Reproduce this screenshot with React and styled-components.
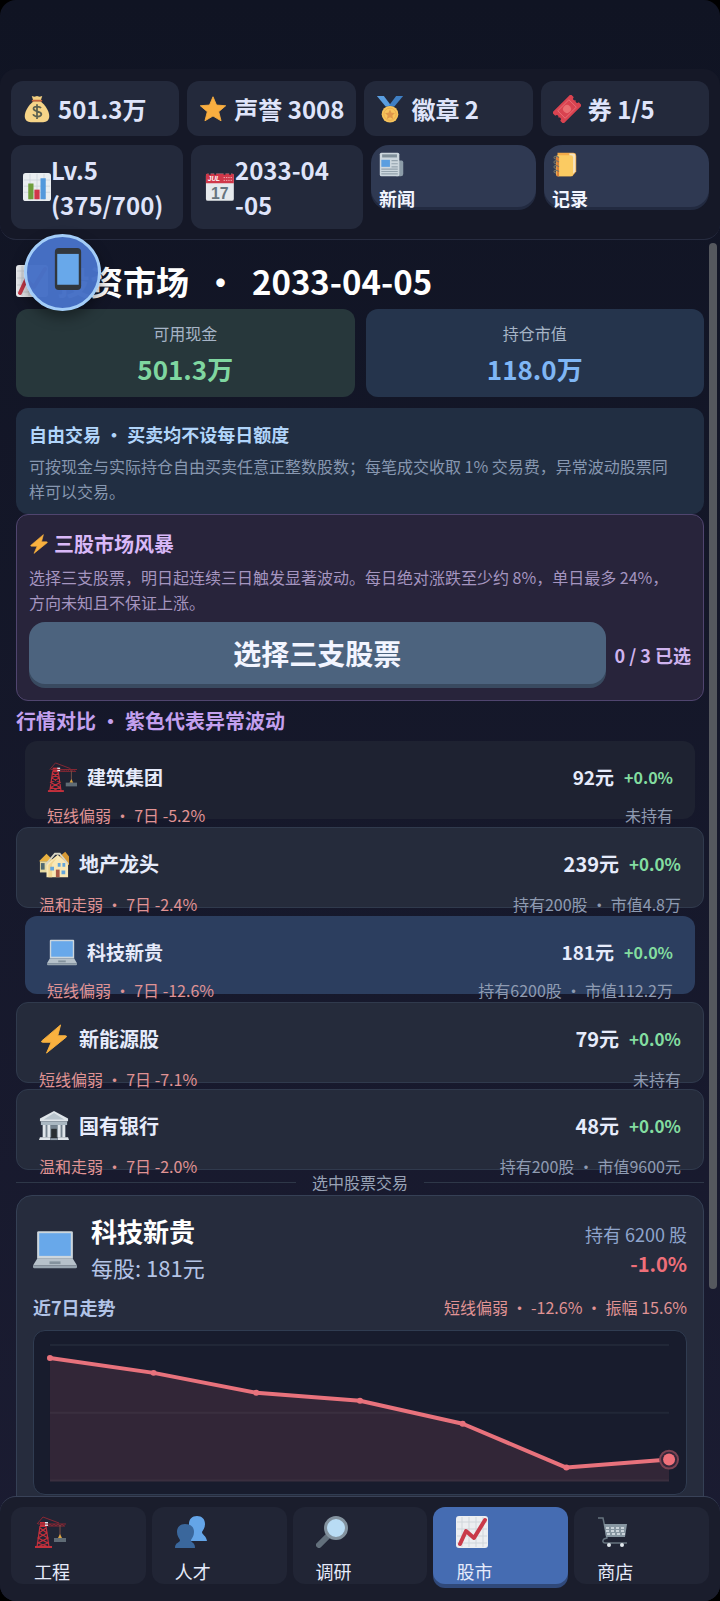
import React from "react";
import styled, { createGlobalStyle, css } from "styled-components";

const GlobalStyle = createGlobalStyle`
	* {
		box-sizing: border-box;
	}

	body {
		margin: 0;
		background-color: #000000;
		font-family: "Noto Sans CJK SC", "Noto Sans", sans-serif;
		color: #dfe4fa;
	}

	button {
		font-family: inherit;
		color: inherit;
		border: none;
		margin: 0;
		text-align: left;
		cursor: pointer;
	}

	h1, h2, h3, p {
		margin: 0;
	}
`;

const stocks = [
	{
		name: "建筑集团",
		icon: "crane",
		price: "92元",
		change: "+0.0%",
		trend: "短线偏弱 · 7日 -5.2%",
		holding: "未持有",
		state: "dim",
	},
	{
		name: "地产龙头",
		icon: "houses",
		price: "239元",
		change: "+0.0%",
		trend: "温和走弱 · 7日 -2.4%",
		holding: "持有200股 · 市值4.8万",
	},
	{
		name: "科技新贵",
		icon: "laptop",
		price: "181元",
		change: "+0.0%",
		trend: "短线偏弱 · 7日 -12.6%",
		holding: "持有6200股 · 市值112.2万",
		state: "selected",
	},
	{
		name: "新能源股",
		icon: "bolt",
		price: "79元",
		change: "+0.0%",
		trend: "短线偏弱 · 7日 -7.1%",
		holding: "未持有",
	},
	{
		name: "国有银行",
		icon: "bank",
		price: "48元",
		change: "+0.0%",
		trend: "温和走弱 · 7日 -2.0%",
		holding: "持有200股 · 市值9600元",
	},
];

const tabs = [
	{ label: "工程", icon: "crane" },
	{ label: "人才", icon: "people" },
	{ label: "调研", icon: "search" },
	{ label: "股市", icon: "chart", active: true },
	{ label: "商店", icon: "cart" },
];

const points = [
	[16, 27],
	[120, 42],
	[223, 62],
	[327, 70],
	[430, 93],
	[534, 137],
	[637, 129],
];

// all drawings share a 32 x 32 box
const drawings = {
	money: (
		<>
			<path d="M10 1l3 1 3-1 3 1 3-1-2 6h-8z" fill="#f2cf80" />
			<path d="M12 7h8c5 4 10 11 10 17 0 5-3 7-7 7H9c-4 0-7-2-7-7 0-6 5-13 10-17z" fill="#f6d488" />
			<path d="M11 6.500h10" stroke="#c8643c" strokeWidth="2" strokeLinecap="round" />
			<path
				d="M20.500 15c-1-2-8.500-3-8.500.8 0 3.700 9 2 9 6.200-.2 3.500-8 3.500-9.500 0M16 10.500v17"
				fill="none"
				stroke="#5d6150"
				strokeWidth="2"
			/>
		</>
	),
	star: (
		<path
			d="M16 2l4 9.500 10.500.8-8 6.800 2.700 10.400L16 24l-9.200 5.500 2.700-10.400-8-6.800 10.500-.8z"
			fill="#f9ae40"
			stroke="#f9ae40"
			strokeLinejoin="round"
		/>
	),
	medal: (
		<>
			<path d="M1 1h8l9 12h-7z" fill="#5a9ee0" />
			<path d="M31 1h-8l-9 12h7z" fill="#3f7fc4" />
			<circle cx="16" cy="22" r="9.500" fill="#f7c45c" />
			<circle cx="16" cy="22" r="7" fill="none" stroke="#e8a94c" />
			<path d="M16 16.500l1.700 3.800 4 .4-3 2.700.9 4-3.600-2.100-3.600 2.100.9-4-3-2.700 4-.4z" fill="#e0984a" />
		</>
	),
	ticket: (
		<g transform="rotate(-45 16 16)">
			<path
				d="M1 7h30v5c-3 0-3 3-1 4-2 1-2 4 1 4v5H1v-5c3 0 3-3 1-4 2-1 2-4-1-4z"
				fill="#d94350"
			/>
			<rect x="7" y="10" width="18" height="12" fill="none" stroke="#ea6f78" strokeWidth="1" />
			<circle cx="16" cy="16" r="4.500" fill="#ea6f72" />
		</g>
	),
	bars: (
		<>
			<rect x="0" y="0" width="32" height="32" rx="3" fill="#e9edf0" />
			<path d="M1 8h30M1 15h30M1 22h30M8 1v30M16 1v30M24 1v30" stroke="#cdd5db" />
			<rect x="6" y="12" width="6" height="18" fill="#6f9e3c" />
			<rect x="13" y="19" width="6" height="11" fill="#d0384a" />
			<rect x="20" y="6" width="6" height="24" fill="#5298dc" />
		</>
	),
	calendar: (
		<g transform="translate(2 1) scale(.93)" fontFamily="Liberation Sans, sans-serif">
			<rect x="1" y="2" width="30" height="29" rx="2" fill="#e6eaed" />
			<path d="M1 12V3q0-1 1-1h28q1 0 1 1v9z" fill="#d0384a" />
			<path d="M5 0v3M11 0v3M21 0v3M27 0v3" stroke="#262a38" strokeWidth="2" />
			<path d="M20 6h9M20 9h9" stroke="#f2b5ba" strokeDasharray="1.500 1" />
			<text x="3" y="10" fontSize="7" fontWeight="700" fontStyle="italic" fill="#ffffff">JUL</text>
			<text x="16" y="29" fontSize="17" textAnchor="middle" fill="#66757f">17</text>
		</g>
	),
	news: (
		<>
			<path d="M24 11h5q2 0 2 2v15q0 3-3 3h-6z" fill="#8c9ca8" />
			<rect x="1" y="1" width="25" height="30" rx="2" fill="#ccd6dd" />
			<path d="M4 5h19" stroke="#7f8f9a" strokeWidth="4" />
			<rect x="3" y="10" width="11" height="9" fill="#5a9ee0" />
			<path d="M16 11h8M16 15h8M16 19h8M3 22h21M3 25h21M3 28h21" stroke="#93a2ad" strokeWidth="1.500" />
		</>
	),
	ledger: (
		<>
			<path d="M7 1h20q4 0 4 4v20l-5 6H7z" fill="#f3ab49" />
			<path d="M22 2h5q3 0 3 3v20l-4 4z" fill="#f5e3c0" />
			<rect x="5" y="4" width="22" height="27" rx="3" fill="#fbcb62" />
			<path d="M5 6h4v25H6z" fill="#d9803a" />
			<path
				d="M9 7c-6-4-9 1-4 2M9 13c-6-4-9 1-4 2M9 19c-6-4-9 1-4 2M9 25c-6-4-9 1-4 2"
				fill="none"
				stroke="#757568"
				strokeWidth="1.300"
			/>
		</>
	),
	chart: (
		<>
			<rect x="0" y="0" width="32" height="32" rx="3" fill="#eceef1" />
			<path d="M1 6h30M1 13h30M1 20h30M1 27h30M6 1v30M13 1v30M20 1v30M27 1v30" stroke="#d0d6db" />
			<path
				d="M4 28l6-13 8 7L29 4"
				fill="none"
				stroke="#c93a4a"
				strokeWidth="4"
				strokeLinejoin="round"
				strokeLinecap="round"
			/>
		</>
	),
	bolt: (
		<path
			d="M23 1L3 18q-1 1.500 1 1.500h9L8 31l21-17q1-1.500-1-1.500h-8z"
			fill="#f9b13f"
			stroke="#f9b13f"
			strokeLinejoin="round"
		/>
	),
	crane: (
		<>
			<path d="M6 6h6v5H6z" fill="#c4303c" />
			<path d="M11 6h3v4h-3z" fill="#dbe2ea" />
			<path d="M4 8h28M14 10h17M9 1L3 8M9 1l16 6" stroke="#8a2733" fill="none" />
			<path
				d="M14 10l2-2 2 2 2-2 2 2 2-2 2 2 2-2 2 2"
				stroke="#8a2733"
				fill="none"
				strokeWidth=".8"
			/>
			<path
				d="M6 10L3 31M12 10l3 21M6 12l7 5-9 5 10 5-11 4M12 12l-7 5 9 5-10 5 11 4"
				fill="none"
				stroke="#c4303c"
				strokeWidth="1.200"
			/>
			<path d="M1 31h17" stroke="#c4303c" strokeWidth="2" />
			<path d="M26 9v13" stroke="#7a5048" strokeWidth="1" />
			<path d="M24 22l2-4 2 4z" fill="#d9a441" />
			<rect x="20" y="22" width="12" height="4" fill="#5f6b75" />
		</>
	),
	houses: (
		<>
			<path d="M1 13h11v12H1z" fill="#e5d8a0" />
			<path d="M0 13l8-8 8 8z" fill="#e8b040" />
			<path d="M22 8l6-5 4 5v9h-6z" fill="#d79a35" />
			<path d="M2 15h4v7H2z" fill="#4f6872" />
			<path d="M8 16L20 6l11 10v14H8z" fill="#f9e8b5" />
			<path d="M7 17L17 5h5l9 11" fill="none" stroke="#d8d6c6" strokeWidth="2" />
			<path d="M20 8l-6 8v14h-4V17z" fill="#f2d692" />
			<path d="M12 19h4v4h-4zM20 15h3v4h-3zM25 15h3v4h-3zM24 23h4v4h-4z" fill="#64a7dc" />
			<path d="M18 22h4v8h-4z" fill="#a85845" />
		</>
	),
	laptop: (
		<>
			<path d="M4 3h24q1 0 1 1v19H3V4q0-1 1-1z" fill="#ccd6dd" />
			<rect x="4.500" y="4.500" width="23" height="16.500" fill="#68a8ea" />
			<path d="M3 23h26l3 5H0z" fill="#b6c1ca" />
			<path d="M0 28h32v1q0 1-1 1H1q-1 0-1-1z" fill="#97a4af" />
			<path d="M12 26h8" stroke="#84929d" strokeWidth="2" />
		</>
	),
	bank: (
		<>
			<path d="M16 0l15 8v3H1V8z" fill="#dfe5ea" />
			<path d="M16 2l11 7H5z" fill="#b8c4cd" />
			<path d="M2 11h28v4H2z" fill="#aab8c2" />
			<path d="M4 15h24v13H4z" fill="#75838f" />
			<path d="M4 15h3v13H4zM9 15h3v13H9zM20 15h3v13h-3zM25 15h3v13h-3z" fill="#dfe5ea" />
			<rect x="13" y="19" width="6" height="10" fill="#292f33" />
			<path d="M1 28h11v3H0zM20 28h11l1 3H20z" fill="#dfe5ea" />
			<path d="M12 29h8v2h-8z" fill="#93a1ac" />
		</>
	),
	people: (
		<>
			<path
				d="M22 0c5 0 8 3 8 8 0 4-2 6-3 8 0 3 4 3 5 9H14c0-7 4-6 4-9-2-2-4-4-4-8 0-5 3-8 8-8z"
				fill="#64a5e8"
			/>
			<path
				d="M10 8c6 0 9 3 9 8 0 4-2 6-3 8 0 3 4 2 4 8H0c0-6 5-5 5-8-1-2-3-4-3-8 0-5 3-8 8-8z"
				fill="#3a679c"
			/>
		</>
	),
	search: (
		<>
			<path d="M3 29l9-9" stroke="#63707c" strokeWidth="6" strokeLinecap="round" />
			<circle cx="20" cy="12" r="10.500" fill="#b9dcf4" stroke="#83929e" strokeWidth="3" />
		</>
	),
	cart: (
		<>
			<path
				d="M1 2h5l4 20-3 1c-2 2-1 4 1 4h22"
				fill="none"
				stroke="#65737e"
				strokeWidth="1.500"
			/>
			<path d="M7 8h23l-2 13H9z" fill="#8796a1" />
			<path d="M9 12h20M9 15h20M10 18h18" stroke="#e1e8ed" strokeWidth="1.500" strokeDasharray="3 2" />
			<circle cx="12" cy="29" r="2" fill="#e1e8ed" />
			<circle cx="25" cy="29" r="2" fill="#e1e8ed" />
		</>
	),
	phone: (
		<>
			<rect x="6" y="0" width="20" height="32" rx="3" fill="#31373d" />
			<rect x="7.800" y="4.500" width="16.400" height="23.500" fill="#68a8ea" />
		</>
	),
};

const Icon = ({ name, size }) => (
	<S.Icon viewBox="0 0 32 32" width={size} height={size} aria-hidden="true">
		{drawings[name]}
	</S.Icon>
);

const StockRow = ({ stock }) => (
	<S.Stock $state={stock.state}>
		<S.StockTop $state={stock.state}>
			<Icon name={stock.icon} size={30} />
			<S.StockName>{stock.name}</S.StockName>
			<span>{stock.price}</span>
			<S.Change $state={stock.state}>{stock.change}</S.Change>
		</S.StockTop>
		<S.StockBottom $state={stock.state}>
			<S.Trend>{stock.trend}</S.Trend>
			<span>{stock.holding}</span>
		</S.StockBottom>
	</S.Stock>
);

const TrendChart = () => {
	const line = points.map((p) => p.join(",")).join(" ");
	const last = points[points.length - 1];

	return (
		<S.ChartBox>
			<S.Chart viewBox="0 0 654 163" role="img" aria-label="近7日走势">
				<path d="M16 14h621M16 82h621M16 150h621" stroke="#212737" strokeWidth="2" />
				<polygon points={`16,151 ${line} 637,151`} fill="#e87078" fillOpacity=".13" />
				<polyline
					points={line}
					fill="none"
					stroke="#e8727c"
					strokeWidth="4"
					strokeLinejoin="round"
				/>
				{points.map(([x, y]) => (
					<circle key={x} cx={x} cy={y} r="3" fill="#e8727c" />
				))}
				<circle cx={last[0]} cy={last[1]} r="9" fill="#35263a" stroke="#7d4252" strokeWidth="2" />
				<circle cx={last[0]} cy={last[1]} r="6" fill="#f0717b" />
			</S.Chart>
		</S.ChartBox>
	);
};

const App = () => {
	return (
		<S.Shell>
			<GlobalStyle />
			<S.Header>
				<S.StatRow>
					<S.Stat><Icon name="money" size={28} />501.3万</S.Stat>
					<S.Stat><Icon name="star" size={28} />声誉 3008</S.Stat>
					<S.Stat><Icon name="medal" size={28} />徽章 2</S.Stat>
					<S.Stat><Icon name="ticket" size={28} />券 1/5</S.Stat>
				</S.StatRow>
				<S.InfoRow>
					<S.Info>
						<Icon name="bars" size={28} />
						<span>Lv.5<br />(375/700)</span>
					</S.Info>
					<S.Info>
						<Icon name="calendar" size={32} />
						<span>2033-04<br />-05</span>
					</S.Info>
					<S.HeaderButton type="button"><Icon name="news" size={25} />新闻</S.HeaderButton>
					<S.HeaderButton type="button"><Icon name="ledger" size={25} />记录</S.HeaderButton>
				</S.InfoRow>
			</S.Header>

			<S.Main>
				<S.Title>
					<Icon name="chart" size={32} />
					<span>投资市场 &nbsp;·&nbsp; 2033-04-05</span>
				</S.Title>

				<S.Balances>
					<S.Balance $bg="#27373b" $color="#7fd6a0">
						<span>可用现金</span>
						<strong>501.3万</strong>
					</S.Balance>
					<S.Balance $bg="#25344c" $color="#7fb6f5">
						<span>持仓市值</span>
						<strong>118.0万</strong>
					</S.Balance>
				</S.Balances>

				<S.Notice>
					<h2>自由交易 · 买卖均不设每日额度</h2>
					<S.Text>
						可按现金与实际持仓自由买卖任意正整数股数；每笔成交收取 1% 交易费，异常波动股票同<br />
						样可以交易。
					</S.Text>
				</S.Notice>

				<S.Storm>
					<h2><Icon name="bolt" size={20} />三股市场风暴</h2>
					<S.Text>
						选择三支股票，明日起连续三日触发显著波动。每日绝对涨跌至少约 8%，单日最多 24%，<br />
						方向未知且不保证上涨。
					</S.Text>
					<S.StormActions>
						<S.PickButton type="button">选择三支股票</S.PickButton>
						<span>0 / 3 已选</span>
					</S.StormActions>
				</S.Storm>

				<S.SectionTitle>行情对比 · 紫色代表异常波动</S.SectionTitle>

				<S.StockList>
					{stocks.map((stock) => (
						<StockRow key={stock.name} stock={stock} />
					))}
				</S.StockList>

				<S.Divider>选中股票交易</S.Divider>

				<S.Detail>
					<S.DetailHead>
						<Icon name="laptop" size={44} />
						<S.DetailName>
							<h3>科技新贵</h3>
							<p>每股: 181元</p>
						</S.DetailName>
						<S.DetailHolding>
							<p>持有 6200 股</p>
							<strong>-1.0%</strong>
						</S.DetailHolding>
					</S.DetailHead>
					<S.ChartHead>
						<strong>近7日走势</strong>
						<S.Trend>短线偏弱 · -12.6% · 振幅 15.6%</S.Trend>
					</S.ChartHead>
					<TrendChart />
				</S.Detail>
				<S.Thumb />
			</S.Main>

			<S.TabBar>
				{tabs.map((tab) => (
					<S.Tab key={tab.label} type="button" $active={tab.active}>
						<Icon name={tab.icon} size={32} />
						{tab.label}
					</S.Tab>
				))}
			</S.TabBar>

			<S.PhoneButton type="button" aria-label="手机">
				<Icon name="phone" size={42} />
			</S.PhoneButton>
		</S.Shell>
	);
};

const S = {
	Icon: styled.svg`
		display: block;
		flex-shrink: 0;
	`,
	Shell: styled.div`
		position: relative;
		display: flex;
		flex-direction: column;
		height: 100vh;
		padding-top: 69px;
		border-radius: 16px;
		overflow: hidden;
		background: linear-gradient(#101423, #1b1c32);
	`,
	Header: styled.header`
		display: grid;
		gap: 9px;
		padding: 12px 11px 10px;
		border-bottom: 1px solid #272c40;
		border-radius: 16px;
		background-color: #151827;
	`,
	StatRow: styled.div`
		display: grid;
		grid-template-columns: repeat(4, 1fr);
		gap: 8px;
	`,
	InfoRow: styled.div`
		display: grid;
		grid-template-columns: 172fr 172fr 165fr 165fr;
		align-items: start;
		gap: 8px;
	`,
	Stat: styled.div`
		display: flex;
		align-items: center;
		gap: 7px;
		padding: 10px 12px;
		border-radius: 12px;
		background-color: #23293b;
		font-size: 24px;
		line-height: 35px;
		font-weight: 700;
		white-space: nowrap;
	`,
	HeaderButton: styled.button`
		display: flex;
		flex-direction: column;
		gap: 8px;
		height: 62px;
		padding: 7px 8px;
		border-radius: 18px;
		background-color: #2f3952;
		box-shadow: 0 3px #222a40;
		color: #f2f5ff;
		font-size: 18px;
		line-height: 26px;
		font-weight: 700;
	`,
	Main: styled.main`
		position: relative;
		flex: 1;
		min-height: 0;
		overflow: hidden;
		padding: 17px 16px 0;
	`,
	Title: styled.h1`
		display: flex;
		align-items: center;
		gap: 9px;
		color: #ffffff;
		font-size: 33px;
		line-height: 48px;
		font-weight: 700;
		white-space: nowrap;
	`,
	Balances: styled.div`
		display: grid;
		grid-template-columns: 1fr 1fr;
		gap: 11px;
		margin: 4px 0 11px;
	`,
	Balance: styled.div`
		display: flex;
		flex-direction: column;
		align-items: center;
		gap: 5px;
		padding: 13px 12px 9px;
		border-radius: 12px;
		background-color: ${(props) => props.$bg};
		color: #a6b4c6;
		font-size: 16px;
		line-height: 23px;

		strong {
			color: ${(props) => props.$color};
			font-size: 26px;
			line-height: 38px;
			font-weight: 700;
		}
	`,
	Notice: styled.section`
		padding: 13px 13px 10px;
		border-radius: 12px;
		background-color: #212e42;
		color: #8797b0;

		h2 {
			margin-bottom: 7px;
			color: #b1d5fa;
			font-size: 18px;
			line-height: 26px;
			font-weight: 700;
		}
	`,
	Text: styled.p`
		font-size: 16px;
		line-height: 25px;
	`,
	Storm: styled.section`
		padding: 14px 12px 12px;
		border: 1px solid #50456f;
		border-radius: 12px;
		background-color: #28243b;
		color: #a595c0;

		h2 {
			display: flex;
			align-items: center;
			gap: 5px;
			margin-bottom: 7px;
			color: #d9b8f8;
			font-size: 20px;
			line-height: 29px;
			font-weight: 700;
		}
	`,
	StormActions: styled.div`
		display: flex;
		align-items: center;
		gap: 9px;
		margin-top: 7px;
		color: #cfb3ee;
		font-size: 18px;
		font-weight: 700;
		white-space: nowrap;
	`,
	PickButton: styled.button`
		flex: 1;
		height: 62px;
		margin-bottom: 4px;
		border-radius: 16px;
		background-color: #4c637e;
		box-shadow: 0 4px #394a60;
		color: #f2f5ff;
		font-size: 28px;
		font-weight: 700;
		text-align: center;
	`,
	SectionTitle: styled.h2`
		margin: 5px 0 4px;
		color: #c3a0ee;
		font-size: 20px;
		line-height: 29px;
		font-weight: 700;
	`,
	StockList: styled.div`
		display: grid;
		gap: 6px;
	`,
	StockTop: styled.span`
		display: flex;
		flex-shrink: 0;
		align-items: center;
		gap: 10px;
		height: 43px;
		color: #e6ebfb;
		font-size: ${(props) => (props.$state ? "19px" : "20px")};
		font-weight: 700;
	`,
	StockName: styled.span`
		flex: 1;
	`,
	Change: styled.span`
		color: #83dda0;
		font-size: ${(props) => (props.$state ? "16px" : "17px")};
	`,
	StockBottom: styled.span`
		display: flex;
		flex-shrink: 0;
		justify-content: space-between;
		margin-top: ${(props) => (props.$state ? "6px" : "8px")};
		color: #8f9bb2;
		font-size: 16px;
		line-height: 23px;
	`,
	Trend: styled.span`
		color: #e09394;
		font-size: 16px;
	`,
	Divider: styled.div`
		display: flex;
		align-items: center;
		gap: 16px;
		color: #98a2b5;
		font-size: 16px;
		line-height: 25px;

		&::before,
		&::after {
			content: "";
			flex: 1;
			height: 1px;
			background-color: #2e3748;
		}
	`,
	Detail: styled.section`
		padding: 17px 16px;
		border: 1px solid #354055;
		border-radius: 16px;
		background-color: #262c3d;
	`,
	DetailHead: styled.div`
		display: flex;
		align-items: center;
		gap: 14px;
	`,
	DetailName: styled.div`
		flex: 1;

		h3 {
			color: #ffffff;
			font-size: 26px;
			line-height: 36px;
			font-weight: 700;
		}

		p {
			color: #b4c4e6;
			font-size: 22px;
			line-height: 36px;
		}
	`,
	DetailHolding: styled.div`
		color: #8ea4cc;
		font-size: 18px;
		line-height: 30px;
		text-align: right;

		strong {
			color: #ee6f79;
			font-size: 20px;
			font-weight: 700;
		}
	`,
	ChartHead: styled.div`
		display: flex;
		justify-content: space-between;
		margin: 9px 0 10px;
		line-height: 26px;

		strong {
			color: #b1c3e6;
			font-size: 18px;
			font-weight: 700;
		}
	`,
	ChartBox: styled.div`
		border: 1px solid #303c51;
		border-radius: 12px;
		background-color: #181c2d;
	`,
	Chart: styled.svg`
		display: block;
		width: 100%;
	`,
	// scroll position marker on the right edge of the list
	Thumb: styled.div`
		position: absolute;
		top: 3px;
		right: 3px;
		width: 8px;
		height: 1046px;
		border-radius: 4px;
		background-color: #55585e;
	`,
	TabBar: styled.nav`
		display: grid;
		grid-template-columns: repeat(5, 1fr);
		gap: 6px;
		padding: 10px 11px 17px;
		border-top: 1px solid #394258;
		border-radius: 16px 16px 0 0;
		background-color: #1a1d2c;
	`,
	Tab: styled.button`
		display: flex;
		flex-direction: column;
		gap: 10px;
		height: 77px;
		padding: 9px 23px 0;
		border-radius: 12px;
		background-color: ${(props) => (props.$active ? "#456cb2" : "#212535")};
		box-shadow: ${(props) => (props.$active ? "0 4px #30497a" : "none")};
		color: #e6ebfb;
		font-size: 18px;
		line-height: 26px;
	`,
	PhoneButton: styled.button`
		position: absolute;
		top: 234px;
		left: 24px;
		display: flex;
		align-items: center;
		justify-content: center;
		width: 77px;
		height: 77px;
		padding: 0 0 8px 10px;
		border: 3px solid #a3cdf8;
		border-radius: 50%;
		background-color: rgba(70, 112, 198, 0.98);
		box-shadow: 0 6px 14px rgba(0, 0, 0, 0.4);
	`,
};

S.Info = styled(S.Stat)`
	gap: 0;
	padding: 7px 12px;
`;

const compactRow = css`
	height: 78px;
	margin: 2px 9px;
	padding: 14px 22px 0;
	border: none;
	background-color: ${(props) => (props.$state === "selected" ? "#2c3e5f" : "#1e2231")};
`;

S.Stock = styled.button.attrs({ type: "button" })`
	display: flex;
	flex-direction: column;
	align-items: stretch;
	height: 81px;
	padding: 14px 22px 0;
	border: 1px solid #303a4d;
	border-radius: 12px;
	background-color: #252b3b;
	${(props) => props.$state && compactRow}
`;

export default App;
